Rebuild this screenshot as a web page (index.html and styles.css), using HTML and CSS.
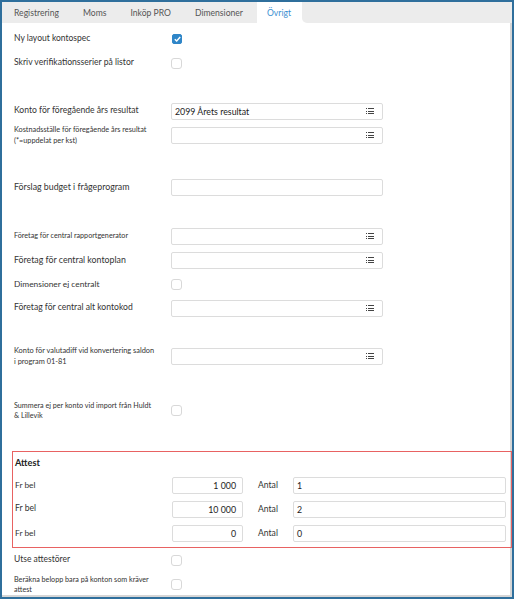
FILE: index.html
```html
<!DOCTYPE html>
<html lang="sv">
<head>
    <meta charset="UTF-8">
    <meta name="viewport" content="width=device-width, initial-scale=1.0">
    <title>Inställningar - Övrigt</title>
    <link rel="stylesheet" href="styles.css">
</head>
<body>
<div class="frame">
    <div class="tabs">
        <div class="tab">Registrering</div>
        <div class="tab">Moms</div>
        <div class="tab">Inköp PRO</div>
        <div class="tab">Dimensioner</div>
        <div class="tab active">Övrigt</div>
        <div class="tab-rest"></div>
    </div>

    <div class="content">
        <div class="row">
            <div class="label s85">Ny layout kontospec</div>
            <span class="check checked">
                <svg width="7" height="6" viewBox="0 0 7 6"><path d="M0.8 3.2 L2.7 5 L6.2 1" fill="none" stroke="#fff" stroke-width="1.4"/></svg>
            </span>
        </div>
        <div class="row">
            <div class="label s86">Skriv verifikationsserier på listor</div>
            <span class="check"></span>
        </div>

        <div class="row g24">
            <div class="label s86">Konto för föregående års resultat</div>
            <div class="field lookup"><span class="value">2099 Årets resultat</span><span class="list-icon"></span></div>
        </div>
        <div class="row">
            <div class="label two s73">Kostnadsställe för föregående års resultat<br>(*=uppdelat per kst)</div>
            <div class="field lookup"><span class="list-icon"></span></div>
        </div>

        <div class="row g28">
            <div class="label s88">Förslag budget i frågeprogram</div>
            <div class="field"></div>
        </div>

        <div class="row g25">
            <div class="label s72">Företag för central rapportgenerator</div>
            <div class="field lookup"><span class="list-icon"></span></div>
        </div>
        <div class="row">
            <div class="label s88">Företag för central kontoplan</div>
            <div class="field lookup"><span class="list-icon"></span></div>
        </div>
        <div class="row">
            <div class="label s84">Dimensioner ej centralt</div>
            <span class="check"></span>
        </div>
        <div class="row">
            <div class="label s86">Företag för central alt kontokod</div>
            <div class="field lookup"><span class="list-icon"></span></div>
        </div>

        <div class="row g24">
            <div class="label two s74">Konto för valutadiff vid konvertering saldon<br>i program 01-81</div>
            <div class="field lookup"><span class="list-icon"></span></div>
        </div>

        <div class="row g30">
            <div class="label two s72">Summera ej per konto vid import från Huldt<br>&amp; Lillevik</div>
            <span class="check"></span>
        </div>

        <div class="attest">
            <div class="attest-title">Attest</div>
            <div class="attest-row">
                <div class="label s84">Fr bel</div>
                <div class="field amount">1 000</div>
                <div class="antal">Antal</div>
                <div class="field count">1</div>
            </div>
            <div class="attest-row">
                <div class="label s86">Fr bel</div>
                <div class="field amount">10 000</div>
                <div class="antal">Antal</div>
                <div class="field count">2</div>
            </div>
            <div class="attest-row">
                <div class="label s84">Fr bel</div>
                <div class="field amount">0</div>
                <div class="antal">Antal</div>
                <div class="field count">0</div>
            </div>
        </div>

        <div class="row">
            <div class="label s85">Utse attestörer</div>
            <span class="check"></span>
        </div>
        <div class="row">
            <div class="label two s72">Beräkna belopp bara på konton som kräver<br>attest</div>
            <span class="check"></span>
        </div>
    </div>
</div>
</body>
</html>
```

FILE: styles.css
```css
* {
    box-sizing: border-box;
}
body {
    margin: 0;
    font-family: Lato, "Noto Sans", sans-serif;
    color: #333;
    background: #fff;
}
.frame {
    width: 514px;
    height: 599px;
    border: 2px solid #2f6f9c;
    box-shadow: inset -2px -2px 0 #d6d6d6;
    overflow: hidden;
}

/* tabs */
.tabs {
    display: flex;
    height: 21px;
    background: #fff;
}
.tab {
    background: #ececec;
    font-size: 8.6px;
    color: #555;
    padding: 6px 12px 0 12px;
}
.tab:nth-child(4) {
    padding-right: 14px;
}
.tab.active {
    background: #fff;
    color: #3b8fd1;
    border-radius: 4px 4px 0 0;
    padding: 6px 11px 0 10px;
}
.tab-rest {
    flex: 1;
    background: #ececec;
    border-bottom-left-radius: 5px;
}

/* form */
.content {
    padding: 4px 0 0 12px;
}
.row {
    display: flex;
    align-items: center;
    height: 24px;
}
.g24 { margin-top: 24px; }
.g25 { margin-top: 25px; }
.g28 { margin-top: 28px; }
.g30 { margin-top: 30px; }

.label {
    width: 157px;
    flex: none;
    line-height: 1.3;
    color: #333;
}
.label.two {
    line-height: 1.45;
    padding-top: 2px;
}
.s72 { font-size: 7.2px; }
.s73 { font-size: 7.3px; }
.s74 { font-size: 7.4px; }
.s84 { font-size: 8.4px; }
.s85 { font-size: 8.5px; }
.s86 { font-size: 8.6px; }
.s88 { font-size: 8.8px; }

.check {
    width: 11px;
    height: 11px;
    border: 1px solid #d8d8d8;
    border-radius: 3px;
    background: #fff;
    display: inline-flex;
    align-items: center;
    justify-content: center;
}
.check.checked {
    width: 10px;
    height: 10px;
    background: #2f86c8;
    border-color: #2f86c8;
    border-radius: 2px;
    margin-left: 1px;
}

.field {
    width: 212px;
    height: 17px;
    border: 1px solid #dcdcdc;
    border-radius: 2px;
    background: #fff;
    font-size: 8.8px;
    color: #222;
    display: flex;
    align-items: center;
    padding: 0 4px 0 3px;
}
.lookup {
    justify-content: space-between;
}
.list-icon {
    margin-left: auto;
    width: 8px;
    height: 6px;
    margin-right: 4px;
    background:
        linear-gradient(#444, #444) 0 0 / 1px 1px no-repeat,
        linear-gradient(#444, #444) 0 2.5px / 1px 1px no-repeat,
        linear-gradient(#444, #444) 0 5px / 1px 1px no-repeat,
        linear-gradient(#444, #444) 2px 0 / 6px 1px no-repeat,
        linear-gradient(#444, #444) 2px 2.5px / 6px 1px no-repeat,
        linear-gradient(#444, #444) 2px 5px / 6px 1px no-repeat;
}

/* attest */
.attest {
    margin: 29px 0 0 -2px;
    width: 500px;
    height: 97px;
    border: 1px solid #e86262;
    padding: 0 0 0 2px;
}
.attest-title {
    font-size: 9.2px;
    font-weight: bold;
    color: #222;
    height: 21px;
    line-height: 21px;
}
.attest-row {
    display: flex;
    align-items: center;
    height: 24px;
}
.amount {
    width: 71px;
    justify-content: flex-end;
    padding-right: 6px;
}
.antal {
    width: 50px;
    padding-left: 15px;
    font-size: 8.6px;
    color: #333;
}
.count {
    width: 213px;
}
```
